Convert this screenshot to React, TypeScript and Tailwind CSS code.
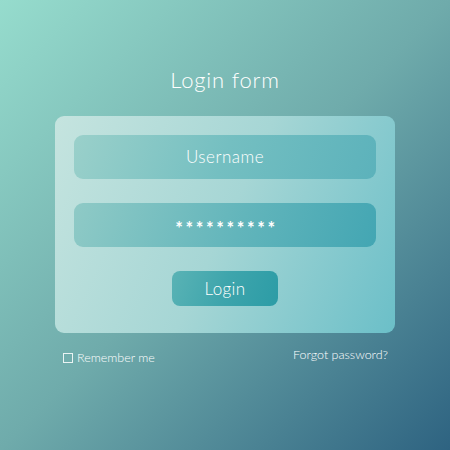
export default function App() {
  return (
    <div
      className="w-[450px] h-[450px] flex flex-col items-center bg-[linear-gradient(135deg,#96dccd_0%,#6fabab_50%,#2e6381_100%)] text-white"
      style={{ fontFamily: "Lato, 'Noto Sans', sans-serif" }}
    >
      {/* 标题 */}
      <h1 className="mt-[65px] text-[22px] leading-[29px] font-light tracking-[0.8px]">Login form</h1>

      {/* 表单卡片 */}
      <div className="mt-[22px] w-[340px] rounded-[9px] px-[19px] pt-[19px] pb-[27px] flex flex-col items-center gap-[24px] bg-[linear-gradient(115deg,#c5e4df_0%,#a6d6d5_50%,#6bbfc8_100%)]">
        <div className="w-full h-[44px] rounded-[9px] flex items-center justify-center text-[17px] font-light tracking-[0.5px] bg-[linear-gradient(110deg,#9ad0ca_0%,#74bfc1_50%,#5cb2bb_100%)]">
          Username
        </div>
        <div className="w-full h-[44px] rounded-[9px] flex items-center justify-center text-[18px] font-bold tracking-[2.6px] pt-[6px] pl-[3px] bg-[linear-gradient(110deg,#8fcac6_0%,#62b5bb_55%,#43a6b3_100%)]">
          **********
        </div>
        <button className="w-[106px] h-[35px] rounded-[8px] flex items-center justify-center text-[17px] font-light tracking-[0.4px] bg-[linear-gradient(110deg,#5ab3b5_0%,#3ea5ac_50%,#2c9ca6_100%)]">
          Login
        </button>
      </div>

      {/* 记住我 / 忘记密码 */}
      <div className="w-[340px] mt-[14px] flex items-start justify-between pl-[8px] pr-[7px] text-[12.5px] font-light leading-[16px]">
        <label className="flex items-center gap-[4px] mt-[3px]">
          <span className="w-[10px] h-[10px] border border-white/85" />
          <span>Remember me</span>
        </label>
        <span>Forgot password?</span>
      </div>
    </div>
  );
}
